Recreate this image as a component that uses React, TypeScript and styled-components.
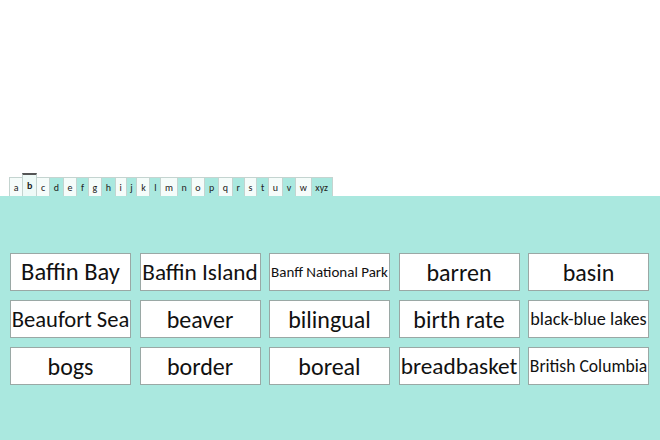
import React from "react";
import styled, { createGlobalStyle } from "styled-components";

const Global = createGlobalStyle`
  html, body { margin: 0; padding: 0; background: #ffffff; }
  body { font-family: Carlito, Lato, "Open Sans", sans-serif; }
`;

const Page = styled.div`
  width: 660px;
  height: 440px;
  display: flex;
  flex-direction: column;
`;

const Top = styled.div`
  height: 173px;
`;

const TabBar = styled.div`
  display: flex;
  align-items: flex-end;
  padding-left: 10px;
  height: 23px;
`;

const Tab = styled.div<{ $teal: boolean; $active: boolean }>`
  height: ${(p) => (p.$active ? "23px" : "19px")};
  padding: 0 3.75px;
  display: flex;
  align-items: center;
  justify-content: center;
  font-size: 10px;
  font-weight: ${(p) => (p.$active ? 700 : 400)};
  color: #222;
  background: ${(p) => (p.$active ? "#eefaf7" : p.$teal ? "#aae8df" : "#f5fcfa")};
  border: 1px solid #c4d4d0;
  border-bottom: none;
  border-top: ${(p) => (p.$active ? "2px solid #555" : "1px solid #c4d4d0")};
  margin-left: -1px;
  box-sizing: border-box;
`;

const Panel = styled.div`
  flex: 1;
  background: #aae8df;
  padding: 57px 10px 0 10px;
`;

const Grid = styled.div`
  display: grid;
  grid-template-columns: repeat(5, 121px);
  grid-auto-rows: 38px;
  column-gap: 8.5px;
  row-gap: 9px;
`;

const Card = styled.div<{ $size: number }>`
  background: #ffffff;
  border: 1px solid #9aa8a5;
  box-sizing: border-box;
  display: flex;
  align-items: center;
  justify-content: center;
  font-size: ${(p) => p.$size}px;
  color: #111;
  white-space: nowrap;
  overflow: hidden;
`;

const letters = ["a","b","c","d","e","f","g","h","i","j","k","l","m","n","o","p","q","r","s","t","u","v","w","xyz"];

const words: [string, number][] = [
  ["Baffin Bay", 24.5],
  ["Baffin Island", 23.2],
  ["Banff National Park", 15],
  ["barren", 24],
  ["basin", 24],
  ["Beaufort Sea", 22.6],
  ["beaver", 24],
  ["bilingual", 24],
  ["birth rate", 24],
  ["black-blue lakes", 18.2],
  ["bogs", 24],
  ["border", 24],
  ["boreal", 24],
  ["breadbasket", 23.3],
  ["British Columbia", 17.6],
];

export default function App() {
  return (
    <Page>
      <Global />
      <Top />
      <TabBar>
        {letters.map((l, i) => (
          <Tab key={l} $teal={i % 2 === 1} $active={l === "b"}>
            {l}
          </Tab>
        ))}
      </TabBar>
      <Panel>
        <Grid>
          {words.map(([w, s]) => (
            <Card key={w} $size={s}>
              {w}
            </Card>
          ))}
        </Grid>
      </Panel>
    </Page>
  );
}
